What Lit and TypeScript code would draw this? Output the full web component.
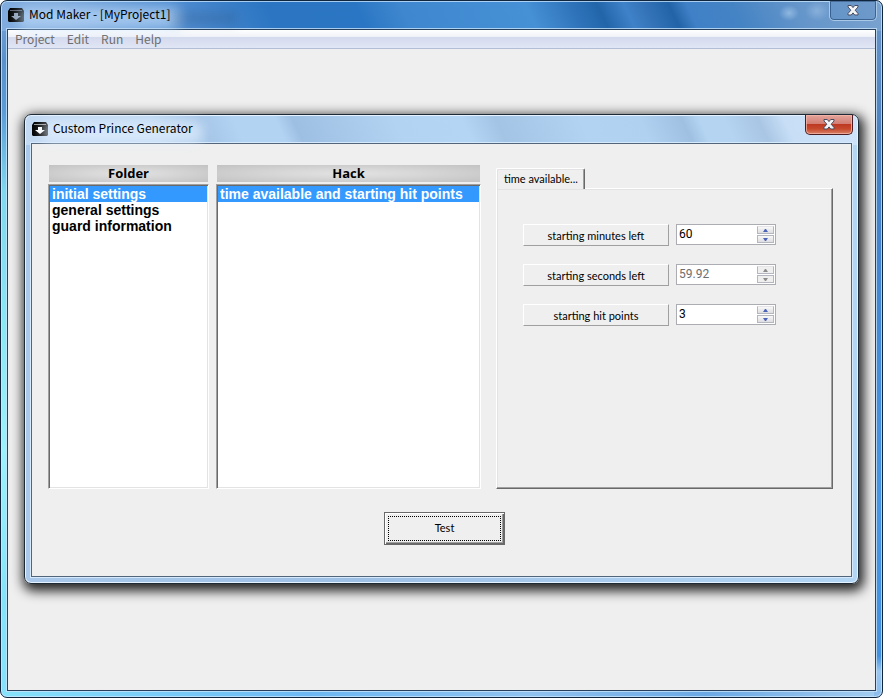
import { LitElement, html, css, svg } from "lit";
import { customElement, property, state } from "lit/decorators.js";
import { classMap } from "lit/directives/class-map.js";

const boxIcon = html`<svg class="icon" width="16" height="14" viewBox="0 0 16 14" aria-hidden="true">
  <path d="M2 0H14L16 3V13L15 14H1L0 13V3Z" fill="#000" />
  <path d="M2 2.5H14" stroke="currentColor" stroke-width="1" opacity="0.6" />
  <path d="M6 5H10V8H13L8 12L3 8H6Z" fill="currentColor" />
</svg>`;

const closeIcon = svg`<svg width="12" height="11" viewBox="0 0 12 11" aria-hidden="true">
  <path d="M1 .5H4.3L6 2.6L7.7 .5H11V2L8.2 5.2L11 8.5V10H7.7L6 7.9L4.3 10H1V8.5L3.8 5.2L1 2Z"
    fill="#f4f4f4" stroke="#464c62" stroke-width="1" />
</svg>`;

@customElement("spin-field")
export class SpinField extends LitElement {
  @property() label = "";
  @property() value = "";
  @property({ type: Boolean }) disabled = false;

  static styles = css`
    :host { display: grid; grid-template-columns: minmax(0, 146fr) minmax(0, 100fr); gap: 7px; align-items: start; }
    * { box-sizing: border-box; }
    .label {
      height: 22px; text-align: center;
      font: 11px/22px Lato, "Liberation Sans", sans-serif; color: #000;
      background: #efefef; border: 1px solid; border-color: #fff #a0a0a0 #a0a0a0 #fff;
      white-space: nowrap;
    }
    .box {
      height: 21px; display: flex; background: #fff;
      border: 1px solid #abadb3; padding: 0 1px 0 2px;
    }
    input {
      flex: 1; min-width: 0; border: 0; outline: 0; padding: 0; background: transparent;
      font: 12px/18px Roboto, "Liberation Sans", sans-serif; color: #000; height: 18px;
    }
    input:disabled { color: #6d6d6d; }
    .spin { display: flex; flex-direction: column; width: 17px; gap: 1px; padding-top: 1px; }
    .spin button {
      height: 8px; padding: 0; border: 1px solid #b4b6c0; border-top-color: #e4e4e8;
      background: linear-gradient(#f8f8f8, #dedee2); color: #4a62b8;
      display: flex; align-items: center; justify-content: center;
    }
    .spin button + button { border-color: #b4b6c0; }
    .spin button:disabled { background: #efefef; color: #8c8c8c; }
  `;

  private step(by: number) {
    this.value = String(Number(this.value) + by);
  }

  render() {
    return html`
      <label class="label" for="value">${this.label}</label>
      <div class="box">
        <input id="value" type="text" inputmode="decimal" .value=${this.value} ?disabled=${this.disabled} />
        <div class="spin">
          <button aria-label="Increase" ?disabled=${this.disabled} @click=${() => this.step(1)}>
            <svg width="5" height="3" viewBox="0 0 5 3"><path d="M0 3L2 0H3L5 3Z" fill="currentColor" /></svg>
          </button>
          <button aria-label="Decrease" ?disabled=${this.disabled} @click=${() => this.step(-1)}>
            <svg width="5" height="3" viewBox="0 0 5 3"><path d="M0 0L2 3H3L5 0Z" fill="currentColor" /></svg>
          </button>
        </div>
      </div>
    `;
  }
}

@customElement("list-column")
export class ListColumn extends LitElement {
  @property() heading = "";
  @property({ attribute: false }) items: string[] = [];
  @state() private selected = 0;

  static styles = css`
    :host { display: flex; flex-direction: column; min-width: 0; }
    * { box-sizing: border-box; }
    h2 {
      margin: 0 1px 2px 1px; height: 17px; text-align: center; color: #000;
      font: bold 13px/17px "Open Sans", "Noto Sans", sans-serif;
      background: radial-gradient(ellipse at center, #e2e2e2 0%, #d8d8d8 35%, #c2c2c2 100%);
    }
    ul {
      margin: 0; list-style: none; height: 305px; background: #fff;
      border: 1px solid; border-color: #a0a0a0 #fff #fff #a0a0a0;
      box-shadow: inset 1px 1px #696969, inset -1px -1px #e3e3e3;
      padding: 1px;
    }
    button {
      display: block; width: 100%; height: 16px; border: 0; margin: 0; padding: 0 2px;
      background: transparent; color: #000; text-align: left; white-space: nowrap;
      font: bold 14px/16px "Liberation Sans", Arial, sans-serif;
    }
    .selected { background: #3399ff; color: #fff; }
  `;

  render() {
    return html`
      <h2>${this.heading}</h2>
      <ul>
        ${this.items.map(
          (item, i) => html`<li>
            <button class=${classMap({ selected: i === this.selected })} @click=${() => (this.selected = i)}>${item}</button>
          </li>`
        )}
      </ul>
    `;
  }
}

@customElement("app-root")
export class AppRoot extends LitElement {
  static styles = css`
    :host {
      display: block; min-height: 100vh; background: #fff; color: #000;
      font: 12px/14px "Noto Sans CJK KR", "Noto Sans", sans-serif;
    }
    * { box-sizing: border-box; }
    .window {
      min-height: 100vh; display: flex; flex-direction: column; padding: 0 6px 6px;
      border: 1px solid #10263f; border-radius: 7px;
      box-shadow: inset 0 0 0 1px rgba(205, 232, 255, 0.75);
      background:
        radial-gradient(ellipse 10px 8px at 788px 12px, rgba(175, 208, 240, 0.6), transparent) no-repeat,
        radial-gradient(ellipse 12px 10px at 816px 10px, rgba(165, 198, 235, 0.5), transparent) no-repeat,
        linear-gradient(65deg, #80acdf 0%, #7ea9dc 8%, #4b8ad0 22%, #2b75c2 31%, #2b76c4 41%, #3f88cf 46%, #4690d6 60%, #2f74bb 65%, #2265a9 68%, #3f82c9 71%, #3574b8 73%, #2263a7 76%, #4080c6 78%, #4483c4 83%, #6495ca 90%, #7ba3cf 100%) top / 100% 30px no-repeat,
        linear-gradient(#6e96c8 0, #4a80c0 140px, #4384cf 250px, #4795e4 500px, #4390df 655px, #9ac6ef 670px, #8cbcec 100%) right / 8px 100% no-repeat,
        linear-gradient(#7ba5d8 0, #5a91cb 60px, #5b9bd6 110px, #7fd8ee 190px, #8be9f5 340px, #9af2fb 450px, #83e4f8 600px, #86e2fb 100%) left / 8px 100% no-repeat,
        linear-gradient(90deg, #86e2fb, #6db8f3 35%, #90c2ef 60%, #6ba9e5 80%, #a5cdf0);
    }
    .titlebar { display: flex; height: 28px; padding: 6px 0 0 1px; }
    .titlebar .icon { margin-top: 1px; flex: none; color: #8f9db2; }
    .title { margin: 0; font: inherit; padding-left: 5px; position: relative; z-index: 0; white-space: nowrap; }
    .title::before {
      content: ""; position: absolute; z-index: -1; inset: 0 -10px 0 -6px;
      background: rgba(190, 219, 249, 0.65); filter: blur(6px); border-radius: 8px;
    }
    .window > .titlebar .title::after {
      content: ""; position: absolute; z-index: -1; inset: 4px -66px 3px 100%;
      background: rgba(40, 75, 115, 0.2); filter: blur(4px);
    }
    .close {
      margin: -6px -1px 0 auto; width: 48px; height: 20px; padding: 0 0 1px; flex: none;
      display: flex; align-items: center; justify-content: center;
      border: 1px solid #a9c8e8; border-top: 0; border-radius: 0 0 5px 5px;
      background: rgba(80, 130, 190, 0.25);
      box-shadow: inset 0 0 0 1px rgba(38, 75, 120, 0.7);
    }
    .client {
      flex: 1; display: flex; flex-direction: column; background: #efefef;
      border: 1px solid #27415f; box-shadow: 0 0 0 1px rgba(200, 228, 250, 0.8);
    }
    .menu {
      display: flex; height: 19px; padding: 0 7px; gap: 12px; border-bottom: 1px solid #b2bdd6;
      background: linear-gradient(#fff 0, #eef1f8 7px, #d4daed 7px, #e1e6f5 100%);
    }
    .menu button {
      border: 0; background: none; padding: 0; color: #6d6d6d; font: inherit; line-height: 17px; height: 17px;
    }
    .dialog {
      margin: 65px 16px 0; padding: 0 6px 6px; border: 1px solid #1e2a36; border-radius: 7px;
      background: linear-gradient(65deg, #c4daf3 0, #bfd8f2 16%, #a6c6e8 22%, #b3d3f3 26%, #b3d3f3 31%, #9dbfe2 33%, #b3d3f2 45%, #b5d5f5 53%, #a3c4e4 57%, #b3d3f3 67%, #b1d1f1 74%, #a0c0e2 79%, #b4d4f2 81%, #b4d4f2 84%, #a9c6e4 88%, #c7def6 91%, #cfe3f9 100%) top / 100% 30px no-repeat,
        linear-gradient(90deg, #a9c8ea, #9ec0e5 40%, #b4d6f5);
      box-shadow: inset 0 0 0 1px #e6f2ff, 2px 4px 12px 3px rgba(0, 0, 0, 0.85);
    }
    .dialog .titlebar .icon { color: #fff; }
    .dialog .title::before { background: rgba(228, 241, 255, 0.65); }
    .dialog .close {
      border-color: #4b1d22; box-shadow: inset 0 0 0 1px rgba(247, 183, 170, 0.75);
      background: linear-gradient(#e3a59c 0, #d27d72 9px, #bd3721 9px, #c64a2d 14px, #d98268 100%);
    }
    .pane {
      background: #efefef; border: 1px solid #52657b; box-shadow: 0 0 0 1px #d6eafe;
      padding: 21px 18px 31px 16px;
    }
    .columns { display: flex; gap: 15px; }
    .lists { flex: 433 1 0; min-width: 0; display: grid; grid-template-columns: 161fr 265fr; gap: 7px; }
    .settings { flex: 337 1 0; min-width: 0; display: flex; flex-direction: column; padding-top: 3px; }
    .tab {
      align-self: flex-start; width: 89px; height: 21px; padding: 0 0 0 7px; margin-bottom: -1px; position: relative;
      font: 11px/20px Lato, "Liberation Sans", sans-serif; text-align: left; white-space: nowrap; color: #000;
      background: #efefef; border: 1px solid; border-color: #fff #696969 transparent #fff; border-bottom: 0;
      border-radius: 2px 2px 0 0; box-shadow: inset -1px 0 #a0a0a0, inset 1px 1px #e3e3e3;
    }
    .panel {
      flex: 1; border: 1px solid; border-color: #fff #696969 #696969 #fff;
      box-shadow: inset -1px -1px #a0a0a0, inset 1px 1px #e3e3e3;
      padding: 35px 56px 0 26px; display: flex; flex-direction: column; gap: 18px;
    }
    .actions { display: flex; justify-content: center; padding: 23px 0 0 8px; }
    .test {
      width: 121px; height: 33px; padding: 3px;
      font: 11px/16px Lato, "Liberation Sans", sans-serif; color: #000; background: #efefef;
      border: 1px solid #696969; box-shadow: inset 1px 1px #fff, inset -1px -1px #696969, inset -2px -2px #a0a0a0;
    }
    .focus { display: block; height: 25px; padding-top: 3px; border: 1px dotted #000; }
  `;

  render() {
    return html`
      <main class="window">
        <header class="titlebar">
          ${boxIcon}
          <h1 class="title">Mod Maker - [MyProject1]</h1>
          <button class="close" aria-label="Close">${closeIcon}</button>
        </header>
        <div class="client">
          <nav class="menu">
            ${["Project", "Edit", "Run", "Help"].map((name) => html`<button>${name}</button>`)}
          </nav>
          <section class="dialog" role="dialog" aria-label="Custom Prince Generator">
            <header class="titlebar">
              ${boxIcon}
              <h2 class="title">Custom Prince Generator</h2>
              <button class="close" aria-label="Close">${closeIcon}</button>
            </header>
            <div class="pane">
              <div class="columns">
                <div class="lists">
                  <list-column heading="Folder" .items=${["initial settings", "general settings", "guard information"]}></list-column>
                  <list-column heading="Hack" .items=${["time available and starting hit points"]}></list-column>
                </div>
                <div class="settings">
                  <button class="tab" role="tab" aria-selected="true">time available...</button>
                  <div class="panel">
                    <spin-field label="starting minutes left" value="60"></spin-field>
                    <spin-field label="starting seconds left" value="59.92" disabled></spin-field>
                    <spin-field label="starting hit points" value="3"></spin-field>
                  </div>
                </div>
              </div>
              <div class="actions">
                <button class="test"><span class="focus">Test</span></button>
              </div>
            </div>
          </section>
        </div>
      </main>
    `;
  }
}
